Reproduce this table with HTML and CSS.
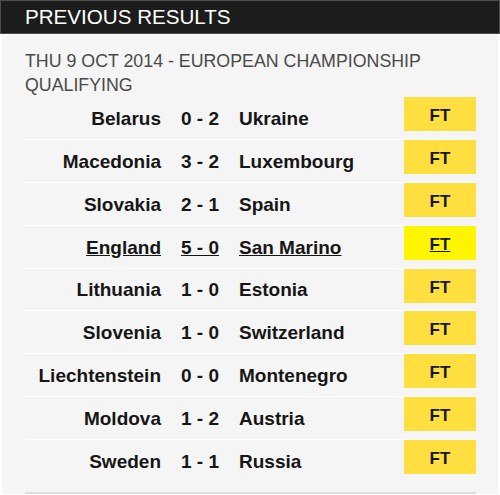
FILE: index.html
```html
<!DOCTYPE html>
<html>
<head>
<meta charset="utf-8">
<link rel="stylesheet" href="styles.css">
</head>
<body>
<div class="widget">
  <div class="bar"><h1 class="bar-title">PREVIOUS RESULTS</h1></div>
  <div class="panel">
    <h2 class="comp">THU 9 OCT 2014 - EUROPEAN CHAMPIONSHIP QUALIFYING</h2>
    <ul class="results">
      <li class="row"><span class="home">Belarus</span><span class="score">0 - 2</span><span class="away">Ukraine</span><span class="ft">FT</span></li>
      <li class="row"><span class="home">Macedonia</span><span class="score">3 - 2</span><span class="away">Luxembourg</span><span class="ft">FT</span></li>
      <li class="row"><span class="home">Slovakia</span><span class="score">2 - 1</span><span class="away">Spain</span><span class="ft">FT</span></li>
      <li class="row active"><span class="home">England</span><span class="score">5 - 0</span><span class="away">San Marino</span><span class="ft">FT</span></li>
      <li class="row"><span class="home">Lithuania</span><span class="score">1 - 0</span><span class="away">Estonia</span><span class="ft">FT</span></li>
      <li class="row"><span class="home">Slovenia</span><span class="score">1 - 0</span><span class="away">Switzerland</span><span class="ft">FT</span></li>
      <li class="row"><span class="home">Liechtenstein</span><span class="score">0 - 0</span><span class="away">Montenegro</span><span class="ft">FT</span></li>
      <li class="row"><span class="home">Moldova</span><span class="score">1 - 2</span><span class="away">Austria</span><span class="ft">FT</span></li>
      <li class="row"><span class="home">Sweden</span><span class="score">1 - 1</span><span class="away">Russia</span><span class="ft">FT</span></li>
    </ul>
  </div>
</div>
</body>
</html>
```
FILE: styles.css
```css
* { box-sizing: border-box; }
html, body { margin: 0; padding: 0; background: #ffffff; }
body { font-family: "Liberation Sans", Arial, sans-serif; }

.widget { width: 500px; }

.bar {
  height: 34px;
  background: #1c1c1c;
  border: 1px solid #4d4d4d;
  padding-left: 24px;
}
.bar-title {
  margin: 0;
  font-size: 20.6px;
  font-weight: normal;
  line-height: 32px;
  color: #ffffff;
}

.panel {
  margin: 0 2px;
  background: #f5f5f5;
  padding: 15px 22px 0 23px;
}

.comp {
  margin: 0;
  font-size: 17.8px;
  font-weight: normal;
  line-height: 24px;
  color: #4a4a4a;
  padding-right: 10px;
}

.results {
  list-style: none;
  margin: 0;
  padding: 0 0 10px 0;
  border-bottom: 2px solid #dedede;
}

.row {
  display: grid;
  grid-template-columns: 136px 78px 1fr 72px;
  align-items: center;
  height: 42.875px;
  border-bottom: 1px solid #ffffff;
  font-size: 19px;
  font-weight: bold;
  color: #161616;
}
.row:last-child { border-bottom: none; height: 41.875px; }

.home { text-align: right; padding-top: 2px; }
.score { text-align: center; padding-top: 2px; }
.away { text-align: left; padding-top: 2px; }

.ft {
  align-self: start;
  height: 34px;
  background: #ffdf40;
  text-align: center;
  font-size: 17px;
  line-height: 31px;
  padding-top: 3px;
}

.active .home,
.active .score,
.active .away,
.active .ft { text-decoration: underline; }
.active .ft { background: #fff500; }
```
